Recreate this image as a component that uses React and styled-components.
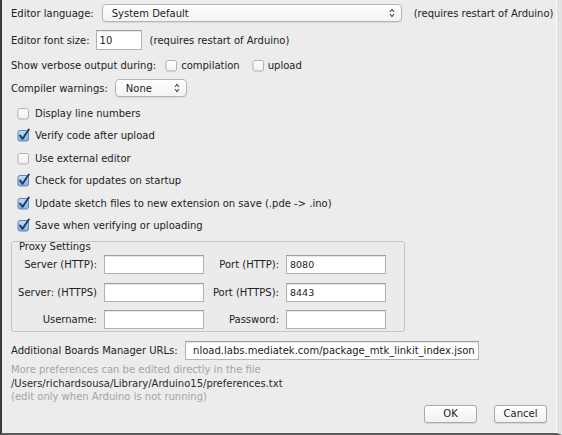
import styled, { createGlobalStyle } from "styled-components";

const Global = createGlobalStyle`
  html, body {
    margin: 0;
    padding: 0;
    background: #ececec;
  }
  * {
    box-sizing: border-box;
  }
`;

const Dialog = styled.div`
  width: 562px;
  height: 435px;
  background: #ececec;
  border-left: 2px solid #3b3b3b;
  border-bottom: 2px solid #5a5a5a;
  border-right: 5px solid #e2e2e2;
  box-shadow: inset -1px 0 0 #fbfbfb;
  font-family: "DejaVu Sans", "Liberation Sans", sans-serif;
  font-size: 10px;
  color: #222;
  padding: 0 0 0 9px;
  display: flex;
  flex-direction: column;
  overflow: hidden;
`;

const Row = styled.div`
  display: flex;
  align-items: center;
  height: ${(p) => p.$h || 18}px;
  margin-top: ${(p) => p.$mt || 0}px;
  white-space: nowrap;
`;

const Label = styled.span`
  margin-right: ${(p) => p.$mr || 0}px;
  margin-left: ${(p) => p.$ml || 0}px;
`;

const Popup = styled.div`
  width: ${(p) => p.$w}px;
  height: 18px;
  border: 1px solid #b4b4b4;
  border-radius: 4px;
  background: linear-gradient(#ffffff, #f3f3f3);
  box-shadow: 0 1px 1px rgba(0, 0, 0, 0.08);
  display: flex;
  align-items: center;
  justify-content: space-between;
  padding: 0 6px 0 ${(p) => p.$pl || 9}px;
  margin-right: ${(p) => p.$mr || 0}px;
`;

const Field = styled.div`
  width: ${(p) => p.$w}px;
  height: ${(p) => p.$h || 19}px;
  background: #fff;
  border: 1px solid #b2b2b2;
  border-top-color: #9c9c9c;
  box-shadow: inset 0 1px 1px rgba(0, 0, 0, 0.1);
  display: flex;
  align-items: center;
  justify-content: ${(p) => (p.$end ? "flex-end" : "flex-start")};
  padding: 0 3px;
  margin-right: ${(p) => p.$mr || 0}px;
  overflow: hidden;
  white-space: nowrap;
  font-size: ${(p) => p.$fs || 10}px;
`;

const CheckList = styled.div`
  margin-top: 5px;
`;

const CheckRow = styled.div`
  display: flex;
  align-items: center;
  height: 22.5px;
  padding-left: 6px;
  gap: 5px;
  white-space: nowrap;
`;

const GroupBox = styled.fieldset`
  margin: 4px 0 0 0;
  padding: 0;
  width: 394px;
  height: 91px;
  border: 1px solid #c6c6c6;
  border-radius: 3px;
  background: #ebebeb;
  display: flex;
  flex-direction: column;
`;

const GroupTitle = styled.div`
  height: 12px;
  line-height: 12px;
  padding-left: 7px;
  margin-top: -1px;
`;

const ProxyGrid = styled.div`
  display: grid;
  grid-template-columns: 85px 100px 68px 100px;
  grid-auto-rows: 19px;
  column-gap: 7px;
  row-gap: 8.5px;
  align-items: center;
  margin-top: 2px;
`;

const ProxyLabel = styled.span`
  text-align: right;
  white-space: nowrap;
`;

const NoteBlock = styled.div`
  margin-top: 3px;
`;

const Note = styled.div`
  line-height: 13.5px;
  color: ${(p) => (p.$dark ? "#2a2a2a" : "#a4a4a4")};
  white-space: nowrap;
`;

const ButtonBar = styled.div`
  display: flex;
  justify-content: flex-end;
  gap: 17px;
  padding-right: 10px;
  margin-top: 1px;
`;

const Button = styled.button`
  width: 53px;
  height: 18px;
  font-family: inherit;
  font-size: 10px;
  color: #222;
  border: 1px solid #a9a9a9;
  border-radius: 3px;
  background: linear-gradient(#ffffff, #f1f1f1);
  box-shadow: 0 1px 1px rgba(0, 0, 0, 0.1);
  padding: 0;
`;

function Arrows() {
  return (
    <svg width="6" height="10" viewBox="0 0 6 10">
      <path d="M1 4 L3 1.5 L5 4" fill="none" stroke="#444" strokeWidth="1.1" />
      <path d="M1 6 L3 8.5 L5 6" fill="none" stroke="#444" strokeWidth="1.1" />
    </svg>
  );
}

function Check({ on }) {
  return (
    <svg width="13" height="13" viewBox="0 0 13 13" style={{ flexShrink: 0, overflow: "visible" }}>
      <defs>
        <linearGradient id="cbOn" x1="0" y1="0" x2="0" y2="1">
          <stop offset="0" stopColor="#c9def3" />
          <stop offset="1" stopColor="#7fb0e4" />
        </linearGradient>
        <linearGradient id="cbOff" x1="0" y1="0" x2="0" y2="1">
          <stop offset="0" stopColor="#ffffff" />
          <stop offset="1" stopColor="#f0f0f0" />
        </linearGradient>
      </defs>
      <rect
        x="1"
        y="1.5"
        width="10.5"
        height="10.5"
        rx="2"
        fill={on ? "url(#cbOn)" : "url(#cbOff)"}
        stroke={on ? "#5f86b5" : "#b0b0b0"}
        strokeWidth="1"
      />
      {on && (
        <path
          d="M3 6.5 L5.6 9.8 L11.8 0.5"
          fill="none"
          stroke="#1e3a6b"
          strokeWidth="2"
          strokeLinecap="round"
          strokeLinejoin="round"
        />
      )}
    </svg>
  );
}

const options = [
  ["Display line numbers", false],
  ["Verify code after upload", true],
  ["Use external editor", false],
  ["Check for updates on startup", true],
  ["Update sketch files to new extension on save (.pde -> .ino)", true],
  ["Save when verifying or uploading", true],
];

export default function App() {
  return (
    <>
      <Global />
      <Dialog>
        <Row $mt={4}>
          <Label $mr={8}>Editor language:</Label>
          <Popup $w={300} $mr={12}>
            <span>System Default</span>
            <Arrows />
          </Popup>
          <span>(requires restart of Arduino)</span>
        </Row>

        <Row $mt={8} $h={20}>
          <Label $mr={6}>Editor font size:</Label>
          <Field $w={46} $h={20} $mr={8}>
            10
          </Field>
          <span>(requires restart of Arduino)</span>
        </Row>

        <Row $mt={6}>
          <Label $mr={9}>Show verbose output during:</Label>
          <Check />
          <Label $ml={3} $mr={12}>
            compilation
          </Label>
          <Check />
          <Label $ml={3}>upload</Label>
        </Row>

        <Row $mt={5}>
          <Label $mr={7}>Compiler warnings:</Label>
          <Popup $w={72} $pl={10}>
            <span>None</span>
            <Arrows />
          </Popup>
        </Row>

        <CheckList>
          {options.map(([text, on]) => (
            <CheckRow key={text}>
              <Check on={on} />
              <span>{text}</span>
            </CheckRow>
          ))}
        </CheckList>

        <GroupBox>
          <GroupTitle>Proxy Settings</GroupTitle>
          <ProxyGrid>
            <ProxyLabel>Server (HTTP):</ProxyLabel>
            <Field $w={100} />
            <ProxyLabel>Port (HTTP):</ProxyLabel>
            <Field $w={100} $fs={9.5}>
              8080
            </Field>
            <ProxyLabel>Server: (HTTPS)</ProxyLabel>
            <Field $w={100} />
            <ProxyLabel>Port (HTTPS):</ProxyLabel>
            <Field $w={100} $fs={9.5}>
              8443
            </Field>
            <ProxyLabel>Username:</ProxyLabel>
            <Field $w={100} />
            <ProxyLabel>Password:</ProxyLabel>
            <Field $w={100} />
          </ProxyGrid>
        </GroupBox>

        <Row $mt={9} $h={19}>
          <Label $mr={7}>Additional Boards Manager URLs:</Label>
          <Field $w={294} $end>
            nload.labs.mediatek.com/package_mtk_linkit_index.json
          </Field>
        </Row>

        <NoteBlock>
          <Note>More preferences can be edited directly in the file</Note>
          <Note $dark>/Users/richardsousa/Library/Arduino15/preferences.txt</Note>
          <Note>(edit only when Arduino is not running)</Note>
        </NoteBlock>

        <ButtonBar>
          <Button>OK</Button>
          <Button>Cancel</Button>
        </ButtonBar>
      </Dialog>
    </>
  );
}
